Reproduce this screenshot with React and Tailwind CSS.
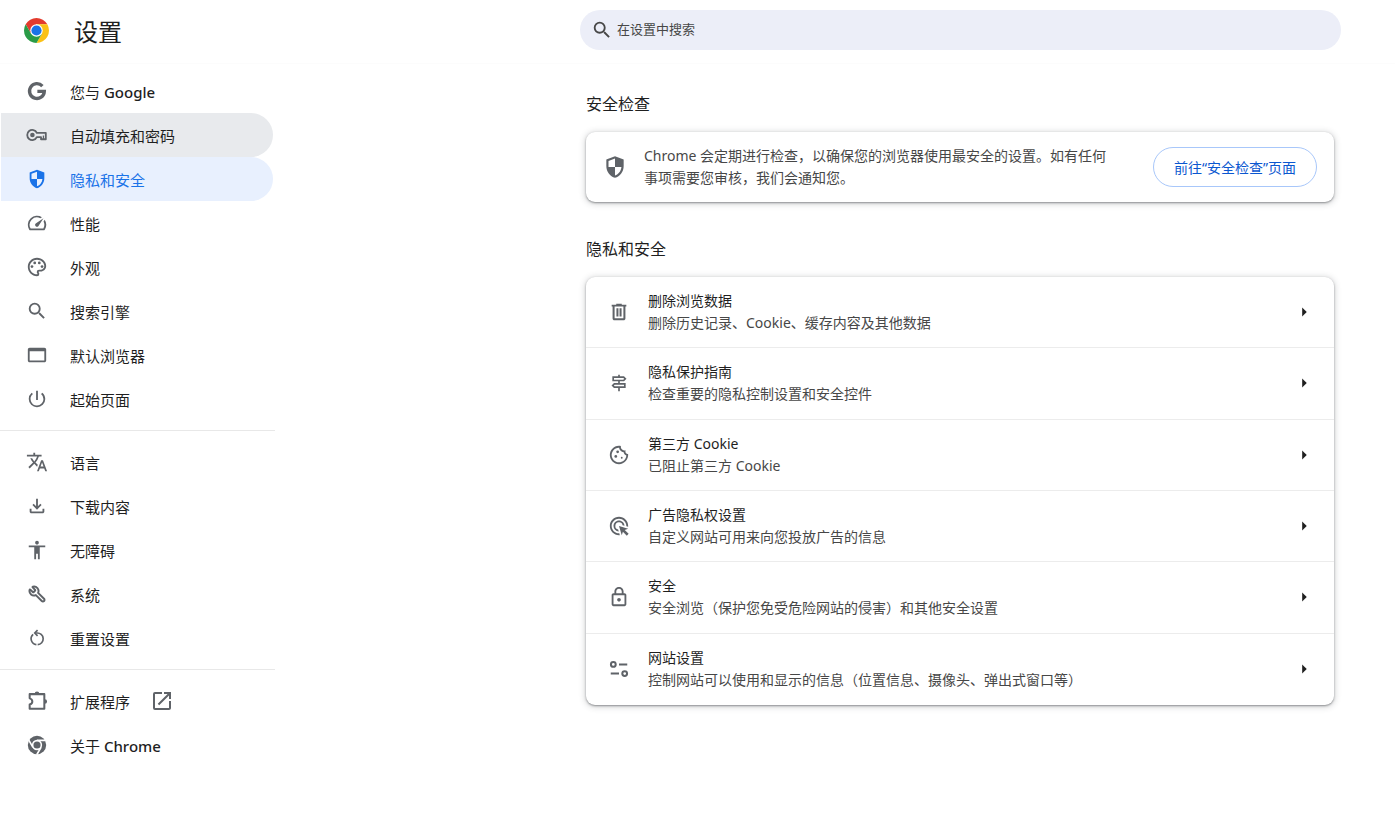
import React from "react";
import {
  MdAccessibility,
  MdAdsClick,
  MdArrowRight,
  MdOpenInNew,
  MdOutlineCookie,
  MdOutlineFileDownload,
  MdOutlineLock,
  MdOutlinePalette,
  MdOutlineSignpost,
  MdPowerSettingsNew,
  MdSearch,
  MdSpeed,
  MdTranslate,
} from "react-icons/md";
import { Wrench } from "lucide-react";

function ChromeLogo() {
  return (
    <svg viewBox="0 0 48 48" className="mb-0.5 size-[25px] shrink-0" aria-hidden="true">
      <path d="M24 12h20.78A24 24 0 0 0 3.22 12l10.39 18z" fill="#e33b2e" />
      <path d="M34.39 30L24 48A24 24 0 0 0 44.78 12H24z" fill="#fbc116" />
      <path d="M13.61 30L3.22 12A24 24 0 0 0 24 48l10.39-18z" fill="#2a9b47" />
      <circle cx="24" cy="24" r="12" fill="#fff" />
      <circle cx="24" cy="24" r="9.8" fill="#1a73e8" />
    </svg>
  );
}

function GoogleIcon({ size }) {
  return (
    <svg width={size} height={size} viewBox="0 0 24 24" fill="none" aria-hidden="true">
      <path d="M17.9 6.6A8.1 8.1 0 1 0 20 12.4H12.4" stroke="currentColor" strokeWidth="3.6" />
    </svg>
  );
}

function ChromeIcon({ size }) {
  return (
    <svg width={size} height={size} viewBox="0 0 24 24" fill="none" aria-hidden="true">
      <circle cx="12" cy="12" r="10" fill="currentColor" />
      <circle cx="12" cy="12" r="5.6" fill="#fff" />
      <path d="M12 6.9h9.4M7.6 14.5L2.9 6.4M16.4 14.5L11.7 22.6" stroke="#fff" strokeWidth="1.8" />
      <circle cx="12" cy="12" r="3.9" fill="currentColor" />
    </svg>
  );
}

function KeyIcon({ size }) {
  return (
    <svg width={size} height={size} viewBox="0 0 24 24" fill="none" aria-hidden="true">
      <path
        d="M11.8 9.6A5.5 5.5 0 1 0 11.8 14.4H16.4v2.2H21.6V9.6z"
        stroke="currentColor"
        strokeWidth="2"
        strokeLinejoin="round"
      />
      <path d="M19 12.6v4" stroke="currentColor" strokeWidth="1.4" />
      <circle cx="7" cy="12" r="2.5" fill="currentColor" />
    </svg>
  );
}

function ShieldIcon({ size }) {
  return (
    <svg width={size} height={size} viewBox="0 0 24 24" fill="currentColor" aria-hidden="true">
      <path d="M12 22c-2.32-.58-4.23-1.91-5.74-3.99S4 13.62 4 11.1V5l8-3 8 3v6.1c0 2.52-.75 4.83-2.26 6.91S14.32 21.42 12 22zm0-2.1c1.62-.5 2.97-1.48 4.05-2.95S17.75 13.83 17.93 12H12V4.13L6 6.38v5.18c0 .12.02.26.05.44H12v7.9z" />
    </svg>
  );
}

function BrowserIcon({ size }) {
  return (
    <svg width={size} height={size} viewBox="0 0 24 24" fill="currentColor" aria-hidden="true">
      <path d="M20 4H4c-1.1 0-2 .9-2 2v12c0 1.1.9 2 2 2h16c1.1 0 2-.9 2-2V6c0-1.1-.9-2-2-2zm0 14H4V8h16v10z" />
    </svg>
  );
}

function WrenchIcon() {
  return <Wrench size={18} strokeWidth={2.6} className="-scale-x-100" />;
}

function ResetIcon({ size }) {
  return (
    <svg width={size} height={size} viewBox="0 0 24 24" fill="none" stroke="currentColor" strokeWidth="2" aria-hidden="true">
      <path d="M11.3 20A7 7 0 0 1 7.4 7.7M9.6 6H12a7 7 0 0 1 .8 14" />
      <path d="M12.7 2.6L9.3 6l3.4 3.4" />
    </svg>
  );
}

function ExtensionIcon({ size }) {
  return (
    <svg width={size} height={size} viewBox="0 0 24 24" aria-hidden="true">
      <path
        d="M4 4.5h16v16H4v-4.6c2-.6 2.9-1.9 2.9-3.4S6 9.7 4 9.1z"
        fill="none"
        stroke="currentColor"
        strokeWidth="2.2"
        strokeLinejoin="round"
      />
      <path d="M9.5 4a2.5 2.5 0 0 1 5 0zM20.5 10a2.5 2.5 0 0 1 0 5z" fill="currentColor" />
    </svg>
  );
}

function TrashIcon({ size }) {
  return (
    <svg width={size} height={size} viewBox="0 0 24 24" fill="currentColor" aria-hidden="true">
      <path d="M7 21c-1.1 0-2-.9-2-2V6H4V4h5V3h6v1h5v2h-1v13c0 1.1-.9 2-2 2zM16.8 6H7.2v12.8h9.6zM9.2 8v9h2.2V8zm3.4 0v9h2.2V8z" fillRule="evenodd" />
    </svg>
  );
}

function SiteSettingsIcon({ size }) {
  return (
    <svg width={size} height={size} viewBox="0 0 24 24" fill="none" stroke="currentColor" strokeWidth="2.2" aria-hidden="true">
      <circle cx="5.8" cy="7" r="2.6" />
      <path d="M12 7h9M3 17h9" />
      <circle cx="18.2" cy="17" r="2.6" />
    </svg>
  );
}

const navGroups = [
  [
    { label: "您与", latin: "Google", icon: GoogleIcon },
    { label: "自动填充和密码", icon: KeyIcon, hovered: true },
    { label: "隐私和安全", icon: ShieldIcon, selected: true },
    { label: "性能", icon: MdSpeed },
    { label: "外观", icon: MdOutlinePalette },
    { label: "搜索引擎", icon: MdSearch },
    { label: "默认浏览器", icon: BrowserIcon },
    { label: "起始页面", icon: MdPowerSettingsNew },
  ],
  [
    { label: "语言", icon: MdTranslate },
    { label: "下载内容", icon: MdOutlineFileDownload },
    { label: "无障碍", icon: MdAccessibility },
    { label: "系统", icon: WrenchIcon },
    { label: "重置设置", icon: ResetIcon, size: 20 },
  ],
  [
    { label: "扩展程序", icon: ExtensionIcon, external: true },
    { label: "关于", latin: "Chrome", icon: ChromeIcon },
  ],
];

const privacyRows = [
  { title: "删除浏览数据", sub: "删除历史记录、Cookie、缓存内容及其他数据", icon: TrashIcon },
  { title: "隐私保护指南", sub: "检查重要的隐私控制设置和安全控件", icon: MdOutlineSignpost, size: 20 },
  { title: "第三方 Cookie", sub: "已阻止第三方 Cookie", icon: MdOutlineCookie },
  { title: "广告隐私权设置", sub: "自定义网站可用来向您投放广告的信息", icon: MdAdsClick },
  { title: "安全", sub: "安全浏览（保护您免受危险网站的侵害）和其他安全设置", icon: MdOutlineLock },
  { title: "网站设置", sub: "控制网站可以使用和显示的信息（位置信息、摄像头、弹出式窗口等）", icon: SiteSettingsIcon },
];

const cardClass =
  "rounded-[9px] bg-white shadow-[0_1px_2px_rgba(60,64,67,0.5),0_1px_6px_1px_rgba(60,64,67,0.22)]";

function NavItem({ item }) {
  const Icon = item.icon;
  let state = "text-[#1f1f1f]";
  if (item.hovered) state = "bg-[#e8eaed] text-[#1f1f1f]";
  if (item.selected) state = "bg-[#e8f0fe] text-[#1a73e8]";

  return (
    <a
      href="#"
      aria-current={item.selected ? "page" : undefined}
      className={`ml-px mr-0.5 flex h-11 items-center rounded-r-full pl-[25px] text-[15px] ${state}`}
    >
      <span
        className={`mr-[22px] flex size-[22px] shrink-0 items-center justify-center ${
          item.selected ? "" : "text-[#5f6368]"
        }`}
      >
        <Icon size={item.size || 22} />
      </span>
      <span className="pt-0.5">
        {item.label}
        {item.latin && <span className="font-medium"> {item.latin}</span>}
      </span>
      {item.external && <MdOpenInNew size={24} className="ml-5 text-[#5f6368]" />}
    </a>
  );
}

function SettingsRow({ row }) {
  const Icon = row.icon;
  return (
    <button
      type="button"
      className="flex w-full items-center border-b border-[#ececec] pl-[22px] pr-[19px] text-left last:border-b-0"
    >
      <span className="mr-[18px] flex size-[22px] shrink-0 items-center justify-center text-[#5f6368]">
        <Icon size={row.size || 22} />
      </span>
      <span className="flex-1 py-3 text-[14px] leading-[22px]">
        <span className="block text-[#1f1f1f]">{row.title}</span>
        <span className="block text-[#474747]">{row.sub}</span>
      </span>
      <MdArrowRight size={22} className="shrink-0 text-[#1f1f1f]" />
    </button>
  );
}

export default function App() {
  return (
    <div className="min-h-screen bg-white font-['Noto_Sans','Noto_Sans_CJK_SC',sans-serif] text-[#1f1f1f]">
      <header className="flex h-16 items-center border-b border-[#fcfcfc] pl-6 pr-[54px]">
        <ChromeLogo />
        <h1 className="ml-[25px] shrink-0 text-2xl">设置</h1>
        <label className="mb-1 ml-auto flex h-10 w-full max-w-[761px] items-center gap-1 rounded-full bg-[#eceef8] pl-[11px] pr-5 text-[#474747]">
          <MdSearch size={22} className="shrink-0" />
          <input
            type="search"
            aria-label="在设置中搜索"
            placeholder="在设置中搜索"
            className="w-full bg-transparent text-[13px] outline-none placeholder:text-[#474747]"
          />
        </label>
      </header>

      <div className="flex">
        {/* Sidebar */}
        <nav className="w-[275px] shrink-0 pt-[5px]">
          {navGroups.map((group, i) => (
            <div key={i}>
              {i > 0 && <hr className="my-[9px] border-[#e8e8e8]" />}
              {group.map((item) => (
                <NavItem key={item.label} item={item} />
              ))}
            </div>
          ))}
        </nav>

        {/* Settings sections */}
        <main className="ml-auto w-full max-w-[809px] pb-8 pr-[61px]">
          <section className="pt-7">
            <h2 className="mb-4 text-base">安全检查</h2>
            <div className={`flex items-center py-[13px] pl-4 pr-[17px] ${cardClass}`}>
              <span className="mr-4 shrink-0 text-[#5f6368]">
                <ShieldIcon size={26} />
              </span>
              <p className="flex-1 text-[14px] leading-[22px] text-[#474747]">
                Chrome 会定期进行检查，以确保您的浏览器使用最安全的设置。如有任何事项需要您审核，我们会通知您。
              </p>
              <button
                type="button"
                className="ml-10 h-10 shrink-0 rounded-full border border-[#a8c7fa] px-5 text-[14px] text-[#0b57d0]"
              >
                前往“安全检查”页面
              </button>
            </div>
          </section>

          <section className="pt-[35px]">
            <h2 className="mb-4 text-base">隐私和安全</h2>
            <div className={`grid min-h-[428px] auto-rows-fr ${cardClass}`}>
              {privacyRows.map((row) => (
                <SettingsRow key={row.title} row={row} />
              ))}
            </div>
          </section>
        </main>
      </div>
    </div>
  );
}
